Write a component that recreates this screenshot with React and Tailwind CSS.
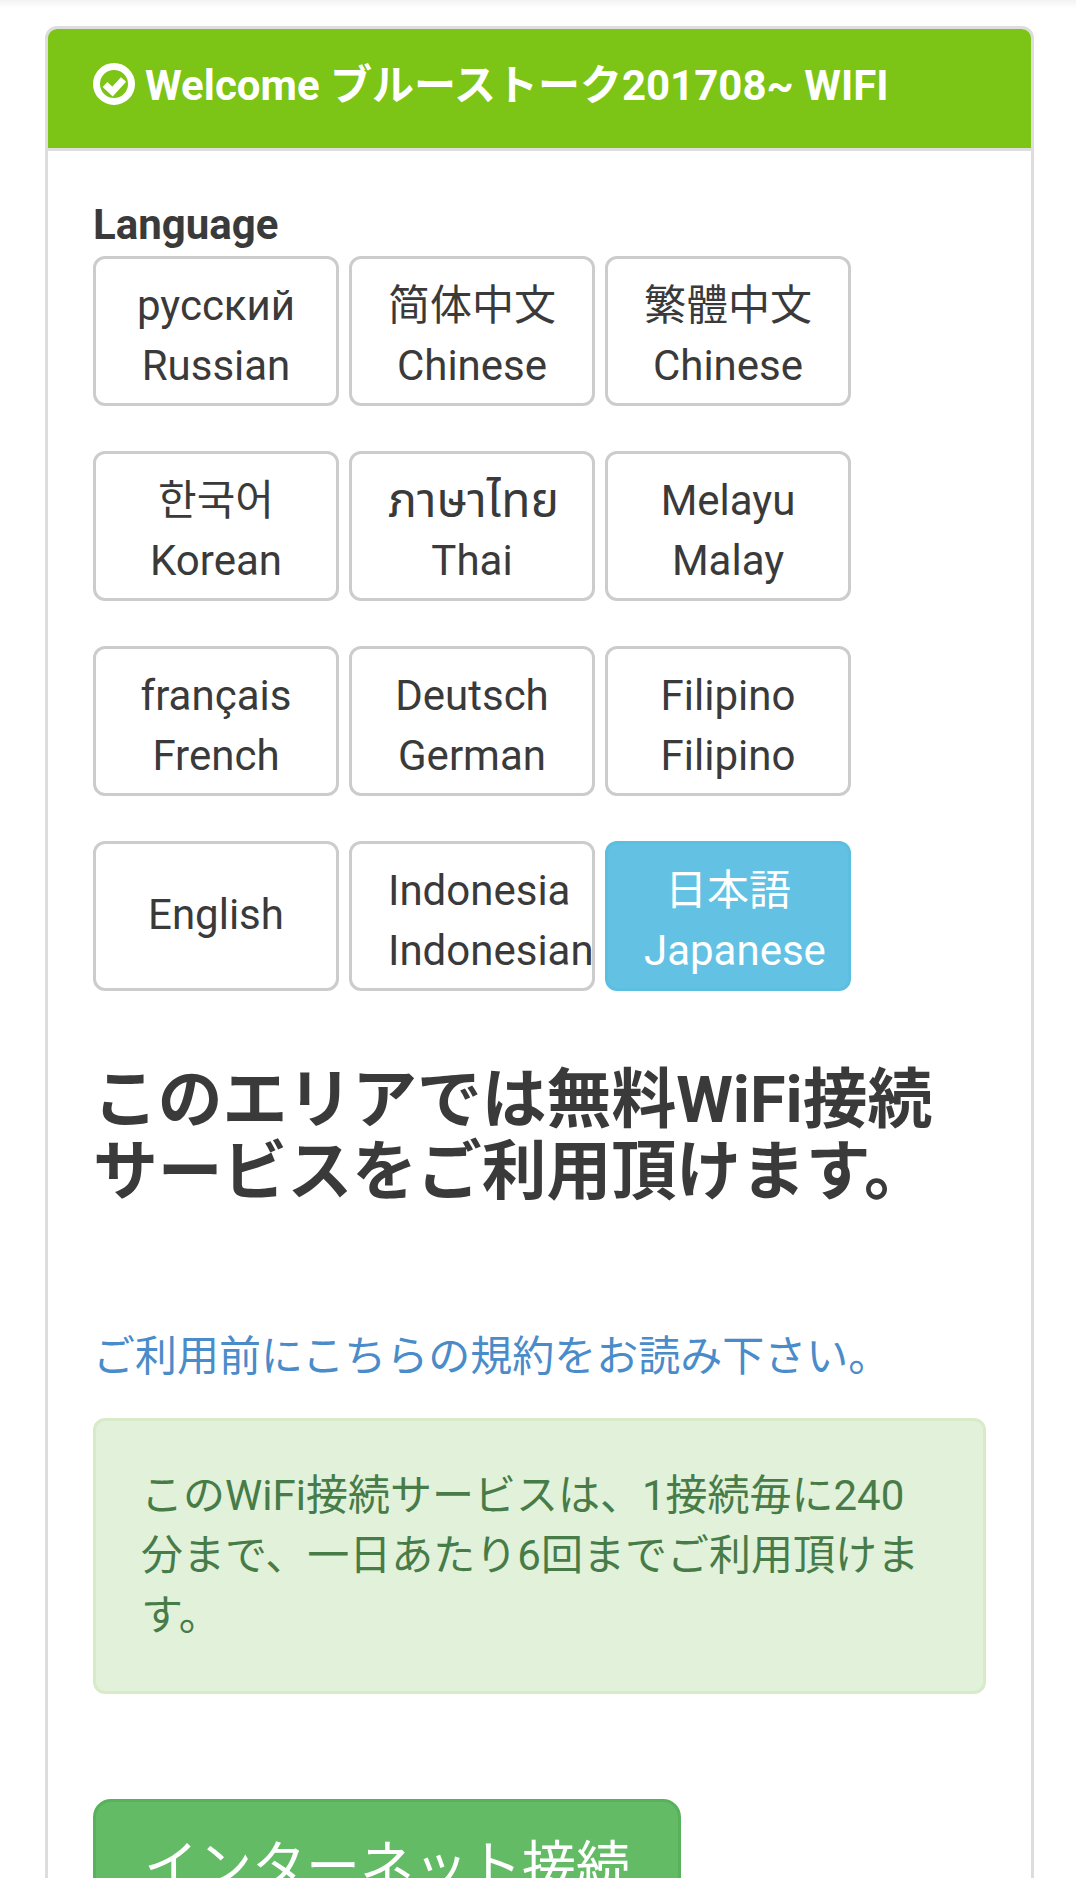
const langs = [
  [["русский", "Russian"], ["简体中文", "Chinese"], ["繁體中文", "Chinese"]],
  [["한국어", "Korean"], ["ภาษาไทย", "Thai"], ["Melayu", "Malay"]],
  [["français", "French"], ["Deutsch", "German"], ["Filipino", "Filipino"]],
  [["English"], ["Indonesia", "Indonesian"], ["日本語", "Japanese"]],
];

function LangButton({ lines }) {
  const active = lines[0] === "日本語";
  return (
    <div
      className={
        "flex h-[150px] w-[246px] shrink-0 flex-col justify-center rounded-[12px] border-[3px] px-[36px] text-center whitespace-nowrap " +
        (lines.length > 1 ? "pt-[10px] " : "pb-[2px] ") +
        (active ? "border-[#5cbfe0] bg-[#63c2e3] text-white" : "border-[#ccc] bg-white text-[#3a3a3a]")
      }
    >
      {lines.map((t) => (
        <div key={t} className={t === "ภาษาไทย" ? "text-[48px] leading-[60px]" : ""}>
          {t}
        </div>
      ))}
    </div>
  );
}

export default function App() {
  return (
    <div
      className="h-[1878px] overflow-hidden bg-white text-[42px] leading-[60px] text-[#3a3a3a]"
      style={{ fontFamily: 'Roboto, "Noto Sans CJK JP", "Noto Sans Thai", "DejaVu Sans", sans-serif' }}
    >
      <div className="h-[8px] bg-gradient-to-b from-[#f3f3f3] to-white" />
      <div className="mt-[18px] ml-[45px] w-[989px] rounded-[12px] border-[3px] border-[#ddd]">
        <div className="flex items-center rounded-t-[9px] border-b-[3px] border-[#ddd] bg-[#7cc416] px-[45px] pt-[30px] pb-[29px] font-bold text-white">
          <svg width="42" height="42" viewBox="0 0 42 42" className="mr-[10px] shrink-0 -translate-y-[5px]">
            <circle cx="21" cy="21" r="17.5" fill="none" stroke="#fff" strokeWidth="7" />
            <path d="M12 21.5 L19.5 28.5 L30.5 16.5" fill="none" stroke="#fff" strokeWidth="7" />
          </svg>
          <span className="-translate-y-[3px]">Welcome ブルーストーク201708~ WIFI</span>
        </div>
        <div className="px-[45px] pt-[44px] pb-[60px]">
          <div className="font-bold">Language</div>
          <div className="mt-[1px] flex flex-col gap-[45px]">
            {langs.map((row, i) => (
              <div key={i} className="flex gap-[10px]">
                {row.map((l) => (
                  <LangButton key={l.join()} lines={l} />
                ))}
              </div>
            ))}
          </div>
          <h2 className="mt-[73px] text-[64.8px] leading-[72px] font-bold">
            このエリアでは無料WiFi接続
            <br />
            サービスをご利用頂けます。
          </h2>
          <a className="mt-[119px] block text-[#4a8cc9]">ご利用前にこちらの規約をお読み下さい。</a>
          <div className="mt-[31px] w-[893px] rounded-[12px] border-[3px] border-[#d8ebc9] bg-[#e1f1da] p-[45px] text-[#477c48]">
            このWiFi接続サービスは、1接続毎に240分まで、一日あたり6回までご利用頂けます。
          </div>
          <div className="mt-[105px] w-[588px] rounded-[18px] border-[3px] border-[#58b25c] bg-[#63bb66] px-[48px] py-[30px] text-[54px] leading-[72px] whitespace-nowrap text-white">
            インターネット接続
          </div>
        </div>
      </div>
    </div>
  );
}
